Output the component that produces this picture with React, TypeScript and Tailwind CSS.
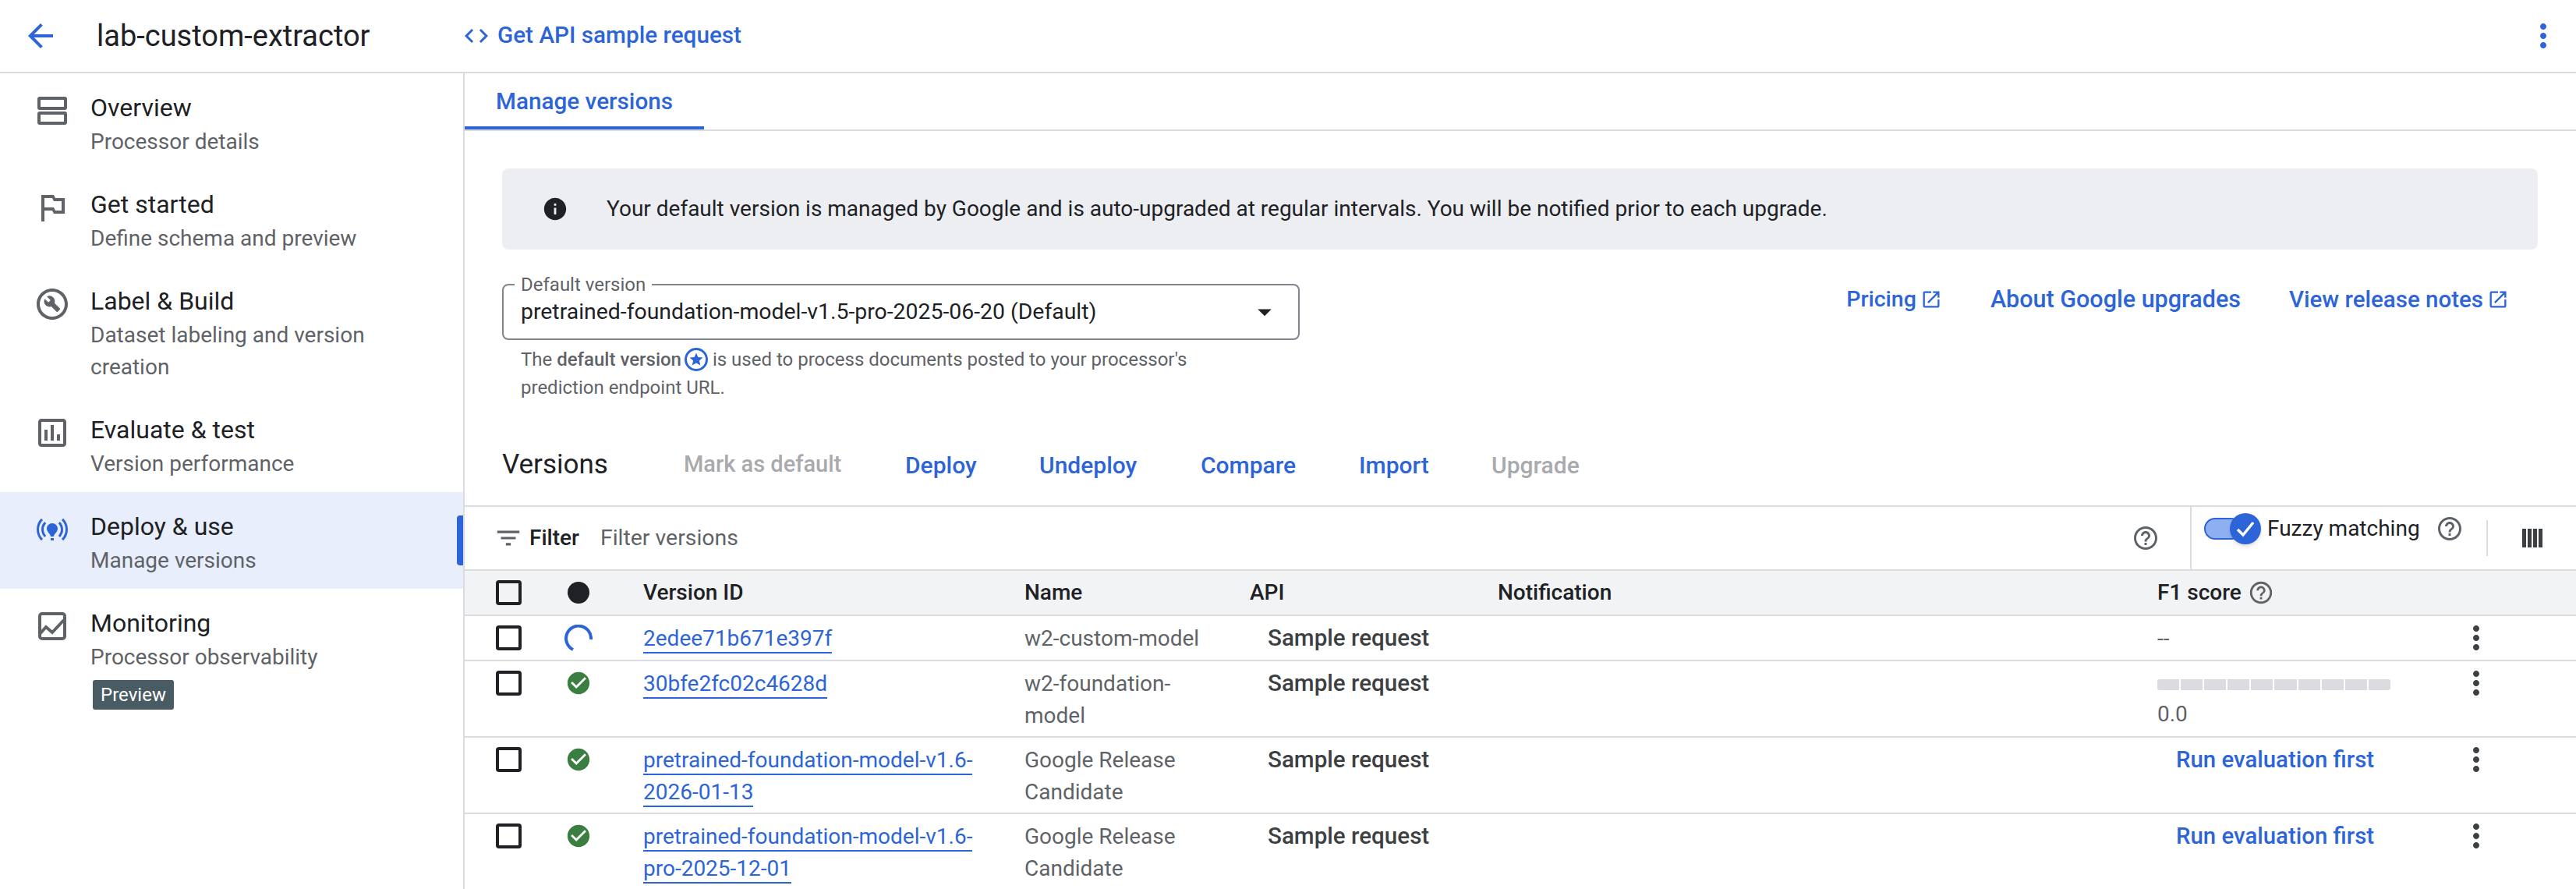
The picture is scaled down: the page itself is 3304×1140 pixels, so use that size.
import {
  MdArrowBack,
  MdArrowDropDown,
  MdCheckCircle,
  MdCode,
  MdFilterList,
  MdHelpOutline,
  MdInfo,
  MdMoreVert,
  MdOnlinePrediction,
  MdOpenInNew,
  MdOutlineAssessment,
  MdOutlineBuildCircle,
  MdOutlinedFlag,
} from "react-icons/md";
import type { ReactNode } from "react";

function OverviewIcon() {
  return (
    <svg width="48" height="48" viewBox="0 0 48 48" fill="none" stroke="#5f6368" strokeWidth="4">
      <rect x="7" y="8" width="34" height="13" rx="1" />
      <rect x="7" y="27" width="34" height="13" rx="1" />
    </svg>
  );
}

function MonitoringIcon() {
  return (
    <svg width="48" height="48" viewBox="0 0 48 48" fill="none" stroke="#5f6368" strokeWidth="4">
      <rect x="8" y="8" width="32" height="32" rx="3" />
      <path d="M8 34 L16 25 L24 32 L39 16" />
    </svg>
  );
}

function NavItem({ icon, title, sub, active, tall, children }: { icon: ReactNode; title: string; sub: ReactNode; active?: boolean; tall?: boolean; children?: ReactNode }) {
  return (
    <div className={`relative flex pl-[43px] gap-[25px] ${tall ? "h-[165px]" : "h-[124px]"} ${active ? "bg-[#e8eefc]" : ""}`}>
      <div className="mt-[24px] h-[48px]">{icon}</div>
      <div className="pt-[22px]">
        <div className="text-[32px] leading-[45px] text-[#202124]">{title}</div>
        <div className="text-[28px] leading-[41px] text-[#5f6368]">{sub}</div>
        {children}
      </div>
      {active && <div className="absolute right-0 top-[30px] w-[8px] h-[64px] rounded-l-[4px] bg-[#2d65d9]" />}
    </div>
  );
}

function Sidebar() {
  return (
    <div className="w-[596px] shrink-0 border-r-2 border-[#dadce0]">
      <NavItem icon={<OverviewIcon />} title="Overview" sub="Processor details" />
      <NavItem icon={<MdOutlinedFlag size={48} color="#5f6368" />} title="Get started" sub="Define schema and preview" />
      <NavItem icon={<MdOutlineBuildCircle size={48} color="#5f6368" />} title="Label & Build" tall sub={<>Dataset labeling and version<br />creation</>} />
      <NavItem icon={<MdOutlineAssessment size={48} color="#5f6368" />} title="Evaluate & test" sub="Version performance" />
      <NavItem icon={<MdOnlinePrediction size={48} color="#2d65d9" />} title="Deploy & use" sub="Manage versions" active />
      <NavItem icon={<MonitoringIcon />} title="Monitoring" sub="Processor observability">
        <div className="ml-[3px] mt-[9px] w-[104px] h-[38px] rounded-[3px] bg-[#4a5c63] text-white text-[24px] leading-[38px] text-center">Preview</div>
      </NavItem>
    </div>
  );
}

function ExternalLink({ label, size }: { label: string; size: string }) {
  return (
    <a className={`flex items-center gap-[5px] text-[#2d65d9] font-medium ${size}`}>
      {label}
      <MdOpenInNew size={28} />
    </a>
  );
}

function Checkbox() {
  return <div className="w-[33px] h-[32px] border-4 border-[#202124] rounded-[4px] box-border" />;
}

const cols = "grid grid-cols-[88px_101px_489px_289px_318px_846px_383px_52px] pl-[40px]";

function Spinner() {
  return (
    <svg width="36" height="36" viewBox="0 0 36 36" fill="none" stroke="#2d65d9" strokeWidth="4">
      <path d="M34 19 A16 16 0 1 0 11 32" />
    </svg>
  );
}

function TableRow({ status, id, name, f1, tall }: { status: ReactNode; id: string; name: string; f1: ReactNode; tall?: boolean }) {
  return (
    <div className={`${cols} ${tall ? "h-[98px]" : "h-[58px]"} border-b-2 border-[#dadce0] text-[28px] leading-[41px]`}>
      <div className="pt-[12px]"><Checkbox /></div>
      <div className="w-[36px] flex justify-center pt-[11px]">{status}</div>
      <div className="pt-[8px] w-[440px]">
        <a className="text-[#2d65d9] border-b-2 border-[#2d65d9] pb-[1px]">{id}</a>
      </div>
      <div className="pt-[8px] w-[240px] text-[#5f6368]">{name}</div>
      <div className="pt-[8px] pl-[23px] font-medium text-[29.6px] text-[#3c4043]">Sample request</div>
      <div />
      <div className="pt-[8px]">{f1}</div>
      <div className="flex justify-center pt-[4px]"><MdMoreVert size={48} color="#3c4043" /></div>
    </div>
  );
}

function Segments() {
  return (
    <div className="mt-[15px] flex gap-[2px] w-[299px] h-[14px] rounded-[3px] overflow-hidden">
      {Array.from({ length: 10 }).map((_, i) => (
        <div key={i} className="flex-1 bg-[#dadce0]" />
      ))}
    </div>
  );
}

const check = <MdCheckCircle size={34} color="#3a7e41" />;
const runEval = <a className="block pl-[24px] text-[#2d65d9] text-[29.4px] font-medium">Run evaluation first</a>;

function App() {
  return (
    <div className="w-[3304px] h-[1140px] overflow-hidden bg-white flex flex-col font-[Roboto,sans-serif]">
      <div className="h-[94px] shrink-0 border-b-2 border-[#dadce0] flex items-center pl-[28px] pr-[18px]">
        <MdArrowBack size={48} color="#2d65d9" />
        <div className="w-[517px] pl-[48px] text-[38px] text-[#202124]">lab-custom-extractor</div>
        <MdCode size={36} color="#2d65d9" />
        <div className="ml-[9px] pb-[2px] text-[29.7px] font-medium text-[#2d65d9]">Get API sample request</div>
        <div className="ml-auto"><MdMoreVert size={48} color="#2d65d9" /></div>
      </div>

      <div className="flex flex-1">
        <Sidebar />
        <div className="flex-1 min-w-0">
          <div className="h-[74px] border-b-2 border-[#dadce0]">
            <div className="w-[307px] h-[72px] border-b-4 border-[#2d65d9] text-[#2d65d9] text-[29.7px] font-medium pl-[40px] leading-[72px]">Manage versions</div>
          </div>

          <div className="pt-[48px] pl-[48px] pr-[49px]">
            <div className="h-[104px] rounded-lg bg-[#eceef2] flex items-center pl-[51px] gap-[49px] text-[28px] text-[#202124]">
              <MdInfo size={34} color="#202124" />
              Your default version is managed by Google and is auto-upgraded at regular intervals. You will be notified prior to each upgrade.
            </div>

            <div className="mt-[44px] flex">
              <div className="relative w-[1023px] h-[72px] border-2 border-[#80868b] rounded-lg flex items-center pl-[22px] pr-[22px] justify-between text-[28.4px] text-[#202124]">
                <span className="absolute -top-[15px] left-[14px] bg-white px-[8px] text-[24px] leading-[28px] text-[#5f6368]">Default version</span>
                pretrained-foundation-model-v1.5-pro-2025-06-20 (Default)
                <MdArrowDropDown size={42} />
              </div>
              <div className="ml-auto flex pr-[37px] h-[40px] items-center">
                <ExternalLink label="Pricing" size="text-[28.5px]" />
                <a className="ml-[62px] text-[#2d65d9] text-[30.5px] font-medium">About Google upgrades</a>
                <div className="ml-[62px]"><ExternalLink label="View release notes" size="text-[29.5px]" /></div>
              </div>
            </div>

            <div className="mt-[7px] pl-[24px] text-[24px] leading-[36px] text-[#5f6368]">
              <div className="flex items-center">
                The&nbsp;<b className="font-medium">default version</b>
                <svg className="ml-[4px]" width="30" height="30" viewBox="0 0 30 30">
                  <circle cx="15" cy="15" r="13.5" fill="none" stroke="#2d65d9" strokeWidth="3" />
                  <path d="M15 6.5l2.4 5.6 6.1.5-4.6 4 1.4 6-5.3-3.2-5.3 3.2 1.4-6-4.6-4 6.1-.5z" fill="#2d65d9" />
                </svg>
                &nbsp;is used to process documents posted to your processor's
              </div>
              <div>prediction endpoint URL.</div>
            </div>

            <div className="mt-[40px] mb-[11px] h-[82px] flex items-center text-[30px] font-medium">
              <div className="w-[233px] text-[35px] font-normal text-[#202124]">Versions</div>
              <div className="w-[284px] text-[29px] text-[#a8aaad]">Mark as default</div>
              <div className="w-[172px] text-[#2d65d9]">Deploy</div>
              <div className="w-[207px] text-[#2d65d9]">Undeploy</div>
              <div className="w-[203px] text-[#2d65d9]">Compare</div>
              <div className="w-[170px] text-[#2d65d9]">Import</div>
              <div className="text-[#a8aaad]">Upgrade</div>
            </div>
          </div>

          <div className="h-[82px] border-t-2 border-[#dadce0] flex items-center">
            <div className="flex-1 flex items-center pl-[37px] pr-[39px]">
              <MdFilterList size={38} color="#5f6368" />
              <span className="ml-[8px] w-[91px] text-[28px] font-medium text-[#202124]">Filter</span>
              <span className="text-[28.4px] text-[#5f6368]">Filter versions</span>
              <div className="ml-auto"><MdHelpOutline size={36} color="#5f6368" /></div>
            </div>
            <div className="w-[495px] h-full border-l-2 border-[#dadce0] flex items-center">
              <div className="relative ml-[16px] mb-[24px] w-[49px] h-[28px] rounded-full bg-[#8fb0f0] border-2 border-[#2d65d9]">
                <div className="absolute left-[31px] -top-[8px] w-[40px] h-[40px] rounded-full bg-[#2d65d9] shadow-md flex items-center justify-center">
                  <svg width="26" height="22" viewBox="0 0 26 22" fill="none" stroke="white" strokeWidth="3.5">
                    <path d="M3 12 L10 19 L23 3" />
                  </svg>
                </div>
              </div>
              <span className="ml-[32px] mb-[24px] text-[28px] text-[#202124]">Fuzzy matching</span>
              <div className="ml-[20px] mb-[24px]"><MdHelpOutline size={36} color="#5f6368" /></div>
              <div className="ml-[29px] w-[2px] h-[46px] bg-[#dadce0]" />
              <div className="ml-[44px] flex gap-[2px] h-[24px]">
                <div className="w-[5px] bg-[#3c4043]" />
                <div className="w-[5px] bg-[#3c4043]" />
                <div className="w-[5px] bg-[#3c4043]" />
                <div className="w-[5px] bg-[#3c4043]" />
              </div>
            </div>
          </div>

          <div className={`${cols} h-[60px] items-center bg-[#f1f3f4] border-y-2 border-[#dadce0] text-[28px] font-medium text-[#202124]`}>
            <Checkbox />
            <div className="w-[28px] h-[28px] ml-[4px] rounded-full bg-[#202124]" />
            <div>Version ID</div>
            <div>Name</div>
            <div>API</div>
            <div>Notification</div>
            <div className="flex items-center gap-[8px]">F1 score <MdHelpOutline size={34} color="#5f6368" /></div>
            <div />
          </div>

          <TableRow status={<Spinner />} id="2edee71b671e397f" name="w2-custom-model" f1={<span className="text-[#5f6368]">--</span>} />
          <TableRow tall status={check} id="30bfe2fc02c4628d" name="w2-foundation-model" f1={<><Segments /><div className="mt-[10px] text-[#5f6368]">0.0</div></>} />
          <TableRow tall status={check} id="pretrained-foundation-model-v1.6-2026-01-13" name="Google Release Candidate" f1={runEval} />
          <TableRow tall status={check} id="pretrained-foundation-model-v1.6-pro-2025-12-01" name="Google Release Candidate" f1={runEval} />
        </div>
      </div>
    </div>
  );
}

export default App;
